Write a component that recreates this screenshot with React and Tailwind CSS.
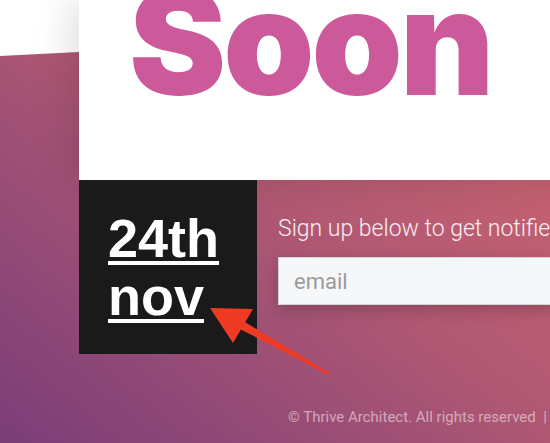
export default function App() {
  return (
    <div className="relative w-[550px] h-[443px] overflow-hidden bg-linear-to-tr from-[#7b3d78] via-[#ae5773] to-[#d6686f]">
      <div className="absolute inset-x-0 top-0 h-[60px] bg-white [clip-path:polygon(0_0,100%_0,100%_28px,0_56px)]" />
      <div className="relative pl-[79px]">
        <div className="w-[720px] h-[180px] bg-white shadow-[-8px_0_36px_rgba(0,0,0,0.13)] pl-[50px] overflow-hidden">
          <div className="mt-[-31px] text-[146px] leading-none font-black text-[#cc5a9a] tracking-[-3px]" style={{ fontFamily: "Inter, sans-serif" }}>
            Soon
          </div>
        </div>
        <div className="flex">
          <div className="w-[178px] h-[174px] bg-[#1a1a1a] pl-[29px] pt-[29px] shrink-0">
            <div className="text-[54px] leading-[58px] font-bold text-white underline decoration-[4px] underline-offset-[4px]" style={{ fontFamily: "'Liberation Sans', Arial, sans-serif" }}>
              24th
              <br />
              nov
            </div>
          </div>
          <div className="pl-[21px] pt-[32px] shrink-0" style={{ fontFamily: "Roboto, sans-serif" }}>
            <div className="text-[23px] leading-[34px] font-light text-white/90 whitespace-nowrap">
              Sign up below to get notified when we launch
            </div>
            <div className="mt-[11px] w-[400px] h-[48px] bg-[#f6f7f9] border border-[#cfd6d8] shadow-[0_6px_14px_rgba(0,0,0,0.18)] flex items-center pl-[15px] text-[22px] text-[#9b9b9b]">
              email
            </div>
          </div>
        </div>
        <div className="mt-[51px] pl-[209px] text-[15px] leading-[24px] text-white/50 whitespace-nowrap" style={{ fontFamily: "Roboto, sans-serif" }}>
          © Thrive Architect. All rights reserved&nbsp;&nbsp;|&nbsp;&nbsp;Privacy Policy
        </div>
      </div>
      <svg className="absolute left-0 top-0 pointer-events-none" width="550" height="443" viewBox="0 0 550 443">
        <polygon points="210,308 253,309 233,343" fill="#ef3b24" />
        <polygon points="240,319 329.5,373.1 328.5,374.9 236,327" fill="#ef3b24" />
      </svg>
    </div>
  );
}
